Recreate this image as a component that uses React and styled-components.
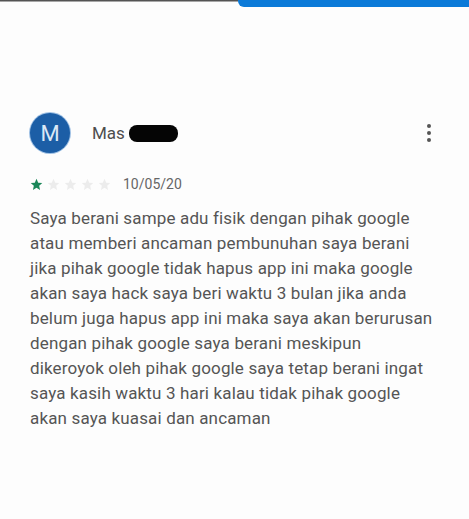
import React from "react";
import styled, { createGlobalStyle } from "styled-components";

const Global = createGlobalStyle`
  html, body {
    margin: 0;
    padding: 0;
    background: #fdfdfd;
    font-family: Roboto, "Liberation Sans", sans-serif;
  }
`;

// page wrapper
const Page = styled.div`
  width: 469px;
  height: 519px;
  overflow: hidden;
  background: #fdfdfd;
`;

// strip along the top edge
const TopStrip = styled.div`
  display: flex;
  height: 8px;
`;

const DarkEdge = styled.div`
  flex: 0 0 238px;
  height: 2px;
  background: linear-gradient(#2a2a2a, #d0d0d0);
`;

const BlueTab = styled.div`
  flex: 1;
  height: 7px;
  background: #0b7ad8;
  border-bottom-left-radius: 6px;
`;

const Review = styled.div`
  padding: 105px 26px 0 30px;
`;

const Header = styled.div`
  display: flex;
  align-items: center;
  gap: 22px;
`;

const Avatar = styled.div`
  width: 40px;
  height: 40px;
  border-radius: 50%;
  background: #1c5ea6;
  box-shadow: 0 0 0 1px #9ec0e4;
  color: #dbe8f6;
  font-size: 22px;
  display: flex;
  align-items: center;
  justify-content: center;
`;

const Name = styled.div`
  display: flex;
  align-items: center;
  gap: 4px;
  font-size: 17px;
  color: #4d4d4d;
  flex: 1;
`;

const Redacted = styled.span`
  display: inline-block;
  width: 49px;
  height: 17px;
  border-radius: 8px;
  background: #050505;
`;

const Menu = styled.div`
  display: flex;
  flex-direction: column;
  gap: 3px;
  padding-right: 12px;
  span {
    width: 4px;
    height: 4px;
    border-radius: 50%;
    background: #555;
  }
`;

const Meta = styled.div`
  display: flex;
  align-items: center;
  margin-top: 23px;
  gap: 12px;
`;

const Stars = styled.div`
  display: flex;
  gap: 4px;
`;

const Date = styled.span`
  font-size: 14px;
  color: #666;
`;

const Body = styled.p`
  margin: 14px 0 0;
  font-size: 17px;
  line-height: 25px;
  color: #555;
  letter-spacing: 0.15px;
`;

const Star = ({ on }) => (
  <svg width="13" height="13" viewBox="0 0 24 24">
    <path
      d="M12 1.5l3.1 7.1 7.6.7-5.8 5.1 1.7 7.6L12 18l-6.6 4 1.7-7.6-5.8-5.1 7.6-.7z"
      fill={on ? "#1b8759" : "#ececec"}
    />
  </svg>
);

const lines = [
  "Saya berani sampe adu fisik dengan pihak google",
  "atau memberi ancaman pembunuhan saya berani",
  "jika pihak google tidak hapus app ini maka google",
  "akan saya hack saya beri waktu 3 bulan jika anda",
  "belum juga hapus app ini maka saya akan berurusan",
  "dengan pihak google saya berani meskipun",
  "dikeroyok oleh pihak google saya tetap berani ingat",
  "saya kasih waktu 3 hari kalau tidak pihak google",
  "akan saya kuasai dan ancaman",
];

const App = () => {
  return (
    <Page>
      <Global />
      <TopStrip>
        <DarkEdge />
        <BlueTab />
      </TopStrip>
      <Review>
        <Header>
          <Avatar>M</Avatar>
          <Name>
            Mas <Redacted />
          </Name>
          <Menu>
            <span />
            <span />
            <span />
          </Menu>
        </Header>
        <Meta>
          <Stars>
            {[1, 2, 3, 4, 5].map((n) => (
              <Star key={n} on={n === 1} />
            ))}
          </Stars>
          <Date>10/05/20</Date>
        </Meta>
        <Body>
          {lines.map((l, i) => (
            <React.Fragment key={i}>
              {l}
              <br />
            </React.Fragment>
          ))}
        </Body>
      </Review>
    </Page>
  );
};

export default App;
